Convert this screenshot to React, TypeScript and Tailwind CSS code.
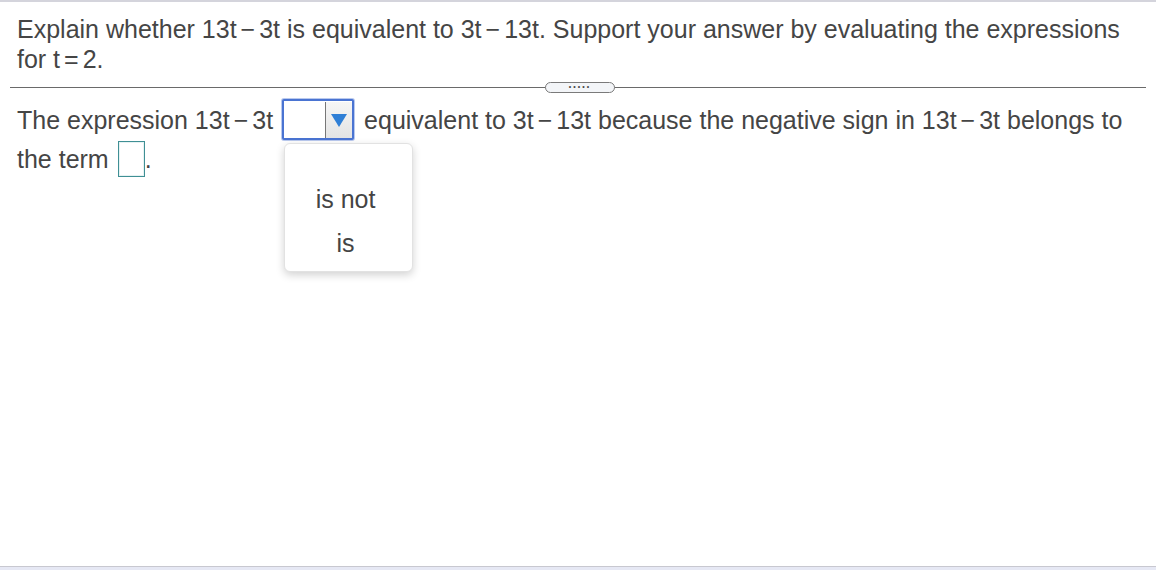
import React from "react";

const Minus = () => <span className="mx-[4px]">−</span>;

export default function App() {
  return (
    <div
      className="relative w-[1156px] h-[570px] bg-white overflow-hidden text-[#454545]"
      style={{ fontFamily: '"Liberation Sans", Arial, sans-serif' }}
    >
      <div className="h-[2px] bg-[#d4d4dc]" />
      <div className="px-[17px] pt-[12px] text-[25px] leading-[30px] h-[85px]">
        Explain whether 13t<Minus />3t is equivalent to 3t<Minus />13t. Support your answer by evaluating the
        expressions for t<span className="mx-[4px]">=</span>2.
      </div>
      <div className="relative mx-[10px] h-[1px] bg-[#6a6a6a]">
        <div className="absolute left-[535px] top-[-5px] w-[70px] h-[11px] rounded-full border border-[#7a7a7a] bg-[#f3f5f8] flex items-center justify-center">
          <span className="text-[7px] leading-none tracking-[2px] text-[#444] -mt-[3px]">•••••</span>
        </div>
      </div>
      <div className="px-[17px] pt-[11px] text-[25px] leading-[38px]">
        <div className="flex items-center h-[41px]">
          <span>The expression 13t<Minus />3t</span>
          <div className="relative ml-[9px] mr-[10px] w-[72px] h-[41px] border-2 border-[#4a74d2] rounded-[2px] bg-white shadow-[0_0_0_1px_#b9c9ee]">
            <div className="absolute right-0 top-[1px] w-[27px] h-[36px] border-l border-[#777] bg-gradient-to-b from-[#f6f6f6] to-[#e4e4e4] flex items-center justify-center">
              <svg width="18" height="16" viewBox="0 0 18 16">
                <polygon points="1,2 17,2 9,15" fill="#2f7fd6" />
              </svg>
            </div>
            <div className="absolute left-[0px] top-[42px] w-[129px] h-[129px] rounded-[6px] border border-[#e2e2e2] bg-white shadow-[0_3px_8px_rgba(0,0,0,0.18)] flex flex-col items-center pt-[40px] gap-[14px] text-[#444] leading-[30px] z-10">
              <span className="-ml-[6px]">is not</span>
              <span className="-ml-[6px]">is</span>
            </div>
          </div>
          <span>
            equivalent to 3t<Minus />13t because the negative sign in 13t<Minus />3t belongs to
          </span>
        </div>
        <div className="flex items-center h-[37px]">
          <span>the term</span>
          <span className="ml-[9px] w-[27px] h-[36px] border border-[#3f8f94] shadow-[inset_0_0_0_1px_#e6f2f3]" />
          <span>.</span>
        </div>
      </div>
      <div className="absolute left-0 bottom-0 w-full h-[4px] border-t border-[#c8c8d0] bg-[#e6e8f4]" />
    </div>
  );
}
